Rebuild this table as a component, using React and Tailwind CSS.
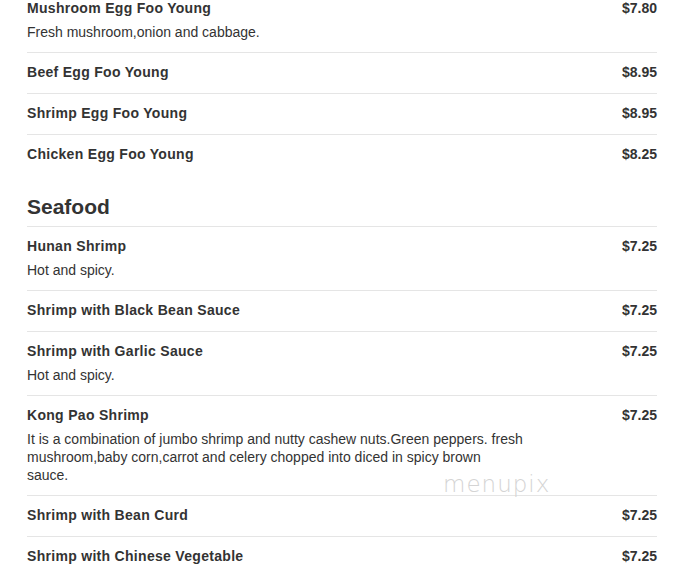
import React from 'react';

const eggFooYoung = [
  { name: 'Mushroom Egg Foo Young', price: '$7.80', desc: 'Fresh mushroom,onion and cabbage.' },
  { name: 'Beef Egg Foo Young', price: '$8.95' },
  { name: 'Shrimp Egg Foo Young', price: '$8.95' },
  { name: 'Chicken Egg Foo Young', price: '$8.25' },
];

const seafood = [
  { name: 'Hunan Shrimp', price: '$7.25', desc: 'Hot and spicy.' },
  { name: 'Shrimp with Black Bean Sauce', price: '$7.25' },
  { name: 'Shrimp with Garlic Sauce', price: '$7.25', desc: 'Hot and spicy.' },
  {
    name: 'Kong Pao Shrimp',
    price: '$7.25',
    desc: 'It is a combination of jumbo shrimp and nutty cashew nuts.Green peppers. fresh mushroom,baby corn,carrot and celery chopped into diced in spicy brown sauce.',
  },
  { name: 'Shrimp with Bean Curd', price: '$7.25' },
  { name: 'Shrimp with Chinese Vegetable', price: '$7.25' },
];

const MenuItem = ({ item, first }) => (
  <div
    className={`${first ? 'pt-0' : 'pt-[11px] border-t border-[#e5e5e5]'} ${item.desc ? 'pb-[11px]' : 'pb-[13px]'}`}
  >
    <div className="flex justify-between items-start">
      <div className="text-[14px] leading-[16px] font-bold tracking-[0.3px] text-[#333]">{item.name}</div>
      <div className="text-[14px] leading-[16px] font-bold text-[#333]">{item.price}</div>
    </div>
    {item.desc && (
      <p className="mt-[7px] w-[497px] text-[14px] leading-[18px] text-[#333]">{item.desc}</p>
    )}
  </div>
);

export default function App() {
  return (
    <div className="relative w-[676px] h-[565px] overflow-hidden bg-white" style={{ fontFamily: '"Liberation Sans", Arial, sans-serif' }}>
      <div className="pl-[27px] pr-[19px]">
        {eggFooYoung.map((item, i) => (
          <MenuItem key={item.name} item={item} first={i === 0} />
        ))}

        <h2 className="mt-[20px] mb-[7px] text-[21px] leading-[24px] font-bold text-[#333]">Seafood</h2>
        {seafood.map((item) => (
          <MenuItem key={item.name} item={item} />
        ))}
      </div>

      {/* watermark */}
      <div
        className="absolute left-[443px] top-[471px] text-[23px] leading-[26px] tracking-[1px] text-[#d4d4d4] select-none"
        style={{ fontFamily: '"DejaVu Sans", sans-serif', fontWeight: 200 }}
      >
        menupix
      </div>
    </div>
  );
}
